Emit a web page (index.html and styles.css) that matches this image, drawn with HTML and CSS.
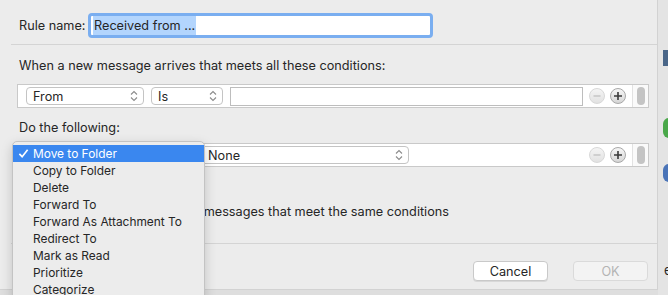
FILE: index.html
```html
<!DOCTYPE html>
<html>
<head>
  <title>Rule</title>
  <link rel="stylesheet" href="styles.css">
</head>
<body>
  <div class="screen">
    <div class="dialog">
      <div class="namerow">
        <span class="label">Rule name:</span>
        <div class="nameinput"><span class="sel">Received from ...</span></div>
      </div>
      <div class="sep"></div>

      <div class="heading first">When a new message arrives that meets all these conditions:</div>
      <div class="box">
        <div class="boxmain">
          <div class="select from">From<svg class="updown" viewBox="0 0 8 12"><path d="M1 4.5L4 1.5L7 4.5M1 7.5L4 10.5L7 7.5"/></svg></div>
          <div class="select is">Is<svg class="updown" viewBox="0 0 8 12"><path d="M1 4.5L4 1.5L7 4.5M1 7.5L4 10.5L7 7.5"/></svg></div>
          <div class="field"></div>
        </div>
        <div class="btns">
          <span class="round minus"><svg viewBox="0 0 16 16"><path d="M4.5 8H11.5"/></svg></span>
          <span class="round plus"><svg viewBox="0 0 16 16"><path d="M4 8H12M8 4V12"/></svg></span>
        </div>
        <div class="track"><div class="thumb"></div></div>
      </div>

      <div class="heading second">Do the following:</div>
      <div class="box actions">
        <div class="boxmain">
          <div class="select action">Move to Folder</div>
          <div class="select folder">None<svg class="updown" viewBox="0 0 8 12"><path d="M1 4.5L4 1.5L7 4.5M1 7.5L4 10.5L7 7.5"/></svg></div>
        </div>
        <div class="btns">
          <span class="round minus"><svg viewBox="0 0 16 16"><path d="M4.5 8H11.5"/></svg></span>
          <span class="round plus"><svg viewBox="0 0 16 16"><path d="M4 8H12M8 4V12"/></svg></span>
        </div>
        <div class="track"><div class="thumb"></div></div>
      </div>

      <div class="applyrow"><span class="checkbox"></span>Apply rule to messages that meet the same conditions</div>
      <div class="sep"></div>

      <div class="footer">
        <div class="button">Cancel</div>
        <div class="button disabled">OK</div>
      </div>

      <div class="menu">
        <div class="item active"><svg class="check" viewBox="0 0 12 12"><path d="M1.5 6.5L4.5 9.5L10.5 2"/></svg>Move to Folder</div>
        <div class="item">Copy to Folder</div>
        <div class="item">Delete</div>
        <div class="item">Forward To</div>
        <div class="item">Forward As Attachment To</div>
        <div class="item">Redirect To</div>
        <div class="item">Mark as Read</div>
        <div class="item">Prioritize</div>
        <div class="item">Categorize</div>
      </div>
    </div>
    <div class="side">
      <div class="chip navy"></div>
      <div class="chip green"></div>
      <div class="chip blue"></div>
      <div class="letter">e</div>
    </div>
  </div>
</body>
</html>
```

FILE: styles.css
```css
body {
  margin: 0;
  background: #dedede;
  font-family: Inter, "Noto Sans", sans-serif;
  font-size: 12.7px;
  color: #262626;
  overflow: hidden;
}
.screen {
  display: flex;
  height: 295px;
}
.dialog {
  position: relative;
  width: 658px;
  height: 290px;
  background: #ececec;
  border-right: 1px solid #d2d2d2;
  border-bottom: 1px solid #d2d2d2;
  box-sizing: border-box;
  flex-shrink: 0;
}
.namerow {
  display: flex;
  align-items: center;
  height: 44px;
  padding: 7px 0 0 19px;
  box-sizing: border-box;
}
.label {
  width: 69px;
}
.nameinput {
  width: 345px;
  height: 25px;
  box-sizing: border-box;
  background: #fff;
  border: 3px solid #7aaef0;
  border-radius: 4px;
  display: flex;
  align-items: center;
  padding-left: 2px;
}
.sel {
  background: #b3d5fd;
  padding: 1px 1px;
  line-height: 17px;
}
.sep {
  margin-left: 11px;
  border-top: 1px solid #d4d4d4;
}
.heading {
  padding-left: 19px;
  line-height: 16px;
  margin-top: 11px;
}
.heading.first {
  margin-top: 13px;
}
.heading.second {
  margin-top: 12px;
}
.box {
  display: flex;
  margin: 10px 0 0 17px;
  width: 632px;
  height: 24px;
  box-sizing: border-box;
  background: #fff;
  border: 1px solid #c9c9c9;
}
.box.actions {
  margin-top: 7px;
}
.boxmain {
  flex: 1;
  display: flex;
  align-items: center;
  padding-left: 8px;
  gap: 7px;
}
.select {
  display: flex;
  align-items: center;
  justify-content: space-between;
  height: 18px;
  box-sizing: border-box;
  border: 1px solid #c4c4c4;
  border-radius: 4px;
  padding: 0 5px 0 6px;
  background: #fff;
}
.select.from {
  width: 118px;
}
.select.is {
  width: 72px;
}
.select.action {
  width: 168px;
}
.select.folder {
  width: 208px;
}
.updown {
  width: 8px;
  height: 12px;
  fill: none;
  stroke: #8c8c8c;
  stroke-width: 1.1;
}
.field {
  width: 353px;
  height: 19px;
  box-sizing: border-box;
  border: 1px solid #bdbdbd;
}
.btns {
  display: flex;
  align-items: center;
  gap: 5px;
  padding-right: 6px;
}
.round {
  width: 16px;
  height: 16px;
  border-radius: 50%;
  box-sizing: border-box;
  display: flex;
}
.round svg {
  width: 16px;
  height: 16px;
  fill: none;
  stroke-width: 1.6;
}
.minus {
  background: linear-gradient(#f4f4f4, #e2e2e2);
  border: 1px solid #d8d8d8;
}
.minus svg {
  stroke: #c9c9c9;
  margin: -1px;
}
.plus {
  background: linear-gradient(#f6f6f6, #d6d6d6);
  border: 1px solid #a8a8a8;
}
.plus svg {
  stroke: #3a3a3a;
  margin: -1px;
}
.track {
  width: 15px;
  border-left: 1px solid #e2e2e2;
  display: flex;
  align-items: center;
  justify-content: center;
  background: #fafafa;
}
.thumb {
  width: 8px;
  height: 18px;
  border-radius: 4px;
  background: #c4c4c4;
}
.applyrow {
  display: flex;
  align-items: flex-start;
  padding-left: 104px;
  margin-top: 37px;
  line-height: 16px;
  height: 39px;
}
.checkbox {
  width: 12px;
  height: 12px;
  margin: 2px 6px 0 0;
  border: 1px solid #b8b8b8;
  border-radius: 3px;
  background: #fff;
}
.footer {
  display: flex;
  justify-content: flex-end;
  gap: 25px;
  padding: 17px 9px 0 0;
}
.button {
  width: 75px;
  height: 20px;
  box-sizing: border-box;
  background: #fff;
  border: 1px solid #c9c9c9;
  border-radius: 4px;
  display: flex;
  align-items: center;
  justify-content: center;
  box-shadow: 0 1px 0 #d8d8d8;
}
.button.disabled {
  background: #f3f3f3;
  color: #b4b4b4;
  border-color: #dadada;
  box-shadow: none;
}
.menu {
  position: absolute;
  left: 12px;
  top: 141px;
  width: 193px;
  height: 160px;
  box-sizing: border-box;
  padding-top: 3px;
  background: #ececec;
  border: 1px solid #c3c3c3;
  border-radius: 5px;
  box-shadow: 0 4px 12px rgba(0, 0, 0, 0.18);
  font-size: 11.9px;
}
.item {
  height: 17px;
  line-height: 17px;
  padding-left: 20px;
  position: relative;
}
.item.active {
  background: #3a87ef;
  color: #fff;
}
.check {
  position: absolute;
  left: 5px;
  top: 3px;
  width: 11px;
  height: 11px;
  fill: none;
  stroke: #fff;
  stroke-width: 1.8;
}
.side {
  position: relative;
  flex: 1;
  background: #e4e4e4;
}
.chip {
  position: absolute;
  left: 5px;
  width: 8px;
}
.navy {
  top: 50px;
  height: 16px;
  background: #4a6688;
}
.green {
  top: 118px;
  height: 20px;
  border-radius: 6px 0 0 6px;
  background: #4aa84a;
}
.blue {
  top: 164px;
  height: 18px;
  border-radius: 6px 0 0 6px;
  background: #4a74b8;
}
.letter {
  position: absolute;
  left: 6px;
  top: 262px;
  font-size: 13px;
}
```
